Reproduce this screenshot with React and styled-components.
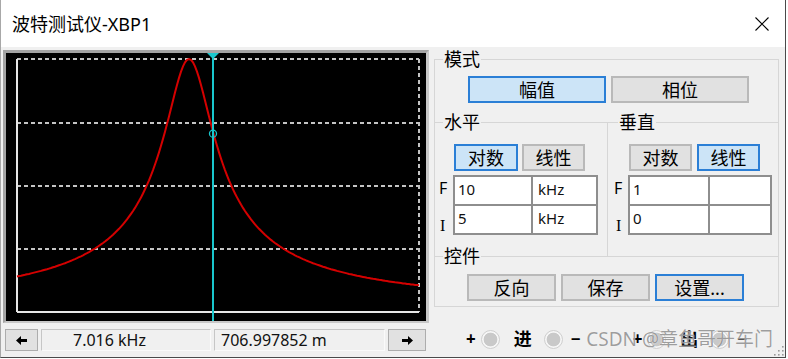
import React from 'react';
import styled, { createGlobalStyle } from 'styled-components';

const GlobalStyle = createGlobalStyle`
  html, body { margin: 0; padding: 0; background: #fff; }
  body { font-family: "Noto Sans", "Noto Sans CJK SC", sans-serif; color: #000; }
  * { box-sizing: border-box; }
`;

const Window = styled.div`
  position: relative;
  width: 786px;
  height: 358px;
  background: #f0f0f0;
  border-left: 1px solid #a8a8a8;
  border-right: 1px solid #4a4a4a;
  border-bottom: 1px solid #4a4a4a;
  overflow: hidden;
`;

const TitleBar = styled.div`
  display: flex;
  align-items: center;
  height: 47px;
  padding-left: 11px;
  background: #fff;
`;

const Title = styled.span`
  font-size: 18px;
  line-height: 22px;
`;

const CloseBox = styled.div`
  margin-left: auto;
  width: 46px;
  height: 47px;
  display: flex;
  align-items: center;
  justify-content: center;
`;

const Body = styled.div`
  display: flex;
  gap: 5px;
  padding: 3px 0 0 2px;
`;

const LeftCol = styled.div`
  width: 426px;
  display: flex;
  flex-direction: column;
  gap: 6px;
`;

const Scope = styled.div`
  height: 273px;
  background: #000;
  border-style: solid;
  border-width: 3px 3px 2px 3px;
  border-color: #a3a3a3 #c8c8c8 #c8c8c8 #a3a3a3;
  svg { display: block; }
`;

const NavRow = styled.div`
  display: flex;
  gap: 3px;
  height: 22px;
  padding-left: 2px;
`;

const NavButton = styled.div`
  width: ${p => p.$w}px;
  background: #e1e1e1;
  border: 1px solid #adadad;
  display: flex;
  align-items: center;
  justify-content: center;
`;

const Readout = styled.div`
  width: ${p => p.$w}px;
  border: 1px solid #c6c6c6;
  border-right-color: #fafafa;
  border-bottom-color: #fafafa;
  padding-left: ${p => p.$pad}px;
  font-size: 16px;
  line-height: 20px;
  color: #111;
  white-space: nowrap;
`;

const RightCol = styled.div`
  width: 345px;
  margin-top: -2px;
  display: flex;
  flex-direction: column;
`;

const Group = styled.fieldset`
  margin: 0;
  padding: 0;
  min-width: 0;
  border: 1px solid #d6d6d6;
`;

const Legend = styled.legend`
  margin-left: ${p => p.$at}px;
  padding: 0 1px;
  font-size: 18px;
  line-height: 22px;
`;

const SubGroup = styled.fieldset`
  margin: ${p => p.$lift ? '-11px 0 0' : '0'};
  padding: 0;
  min-width: 0;
  border: none;
  border-top: 1px solid #d6d6d6;
  border-right: ${p => p.$divider ? '1px solid #d6d6d6' : 'none'};
  width: ${p => p.$w ? `${p.$w}px` : 'auto'};
  flex: ${p => p.$w ? 'none' : '1'};
  height: ${p => p.$h ? `${p.$h}px` : 'auto'};
`;

const ButtonRow = styled.div`
  display: flex;
  gap: ${p => p.$gap}px;
  padding: ${p => p.$pad};
`;

const Button = styled.div`
  width: ${p => p.$w}px;
  height: 27px;
  display: flex;
  align-items: center;
  justify-content: center;
  font-size: 18px;
  line-height: 1;
  background: ${p => p.$on ? '#cce4f7' : '#e1e1e1'};
  border: 2px solid ${p => p.$focus ? '#2b7fd6' : '#b9b9b9'};
`;

const Split = styled.div`
  display: flex;
`;

const Entry = styled.div`
  display: flex;
  margin-top: 4px;
`;

const Letters = styled.div`
  width: ${p => p.$w}px;
  display: flex;
  flex-direction: column;
`;

const Letter = styled.div`
  height: 30px;
  padding-top: ${p => p.$drop ? 10 : 2}px;
  padding-left: ${p => p.$left}px;
  font-family: ${p => p.$serif ? '"Liberation Serif", serif' : '"Noto Sans", sans-serif'};
  font-size: 16px;
  line-height: 22px;
`;

const Cells = styled.div`
  display: grid;
  grid-template-columns: ${p => p.$cols};
  grid-template-rows: 27px 27px;
  gap: 2px;
  padding: 2px;
  background: #8e8e8e;
`;

const Cell = styled.div`
  background: #fff;
  font-size: 15px;
  line-height: 20px;
  padding: 2px 0 0 ${p => p.$pad || 3}px;
  color: #101010;
`;

const RadioRow = styled.div`
  display: flex;
  align-items: center;
  height: 22px;
  margin-top: 21px;
  padding-left: 32px;
  gap: 52px;
`;

const RadioGroup = styled.div`
  display: flex;
  align-items: center;
`;

const Sign = styled.span`
  font-size: 17px;
  font-weight: 700;
  line-height: 20px;
  margin: ${p => p.$m};
`;

const Word = styled.span`
  font-size: 18px;
  font-weight: 700;
  line-height: 20px;
  margin: 0 12px 0 14px;
`;

const Radio = styled.span`
  width: 19px;
  height: 19px;
  border-radius: 50%;
  border: 1px solid #cfcfcf;
  background: radial-gradient(circle, #c9c9c9 0 6.5px, #f6f6f6 7.2px);
`;

const Watermark = styled.div`
  position: absolute;
  right: 12px;
  top: 327px;
  font-size: 19px;
  line-height: 24px;
  color: rgba(120, 120, 120, 0.72);
  text-shadow: 0 0 1px #fff;
  white-space: nowrap;
`;

const Grip = styled.svg`
  position: absolute;
  right: 1px;
  bottom: 1px;
`;

function Chart() {
  const pts = [];
  for (let x = 11; x <= 413; x += 2) {
    const d = x - 183;
    const g = 1 / Math.sqrt(1 + (0.041 * d) ** 2);
    pts.push(`${x},${(259 - 253 * g).toFixed(1)}`);
  }
  const cx = 207;
  const cg = 1 / Math.sqrt(1 + (0.041 * (cx - 183)) ** 2);
  const cy = 259 - 253 * cg + 2;
  const grid = [70, 133, 196];
  return (
    <svg width="420" height="268" viewBox="0 0 420 268">
      <line x1="11" y1="6" x2="413" y2="6" stroke="#c4c4c4" strokeWidth="2" strokeDasharray="4 3" />
      {grid.map(y => (
        <line key={y} x1="11" y1={y} x2="413" y2={y} stroke="#c4c4c4" strokeWidth="2" strokeDasharray="4 3" />
      ))}
      <line x1="413" y1="6" x2="413" y2="259" stroke="#c4c4c4" strokeWidth="2" strokeDasharray="4 3" />
      <line x1="11" y1="6" x2="11" y2="259" stroke="#e6e6e6" strokeWidth="2" />
      <line x1="11" y1="259" x2="413" y2="259" stroke="#e6e6e6" strokeWidth="2" />
      <polyline points={pts.join(' ')} fill="none" stroke="#d40000" strokeWidth="2" />
      <line x1={cx} y1="0" x2={cx} y2="268" stroke="#19c6cc" strokeWidth="2" />
      <polygon points={`${cx - 6},0 ${cx + 6},0 ${cx},6`} fill="#19c6cc" />
      <circle cx={cx} cy={cy} r="3.5" fill="none" stroke="#19c6cc" strokeWidth="1.3" />
    </svg>
  );
}

function Arrow({ right }) {
  return (
    <svg width="11" height="9" viewBox="0 0 11 9" style={right ? { transform: 'scaleX(-1)' } : undefined}>
      <path d="M0 4.5 L5 0 L5 3 L11 3 L11 6 L5 6 L5 9 Z" fill="#000" />
    </svg>
  );
}

function Entries({ lw, cols, rows, fLeft, iLeft }) {
  return (
    <Entry>
      <Letters $w={lw}>
        <Letter $left={fLeft}>F</Letter>
        <Letter $left={iLeft} $serif $drop>I</Letter>
      </Letters>
      <Cells $cols={cols}>
        {rows.flat().map((v, i) => (
          <Cell key={i} $pad={i % 2 ? 5 : 3}>{v}</Cell>
        ))}
      </Cells>
    </Entry>
  );
}

function Radios({ word }) {
  return (
    <RadioGroup>
      <Sign $m="0 5px 0 0">+</Sign>
      <Radio />
      <Word>{word}</Word>
      <Radio />
      <Sign $m="0 0 0 8px">−</Sign>
    </RadioGroup>
  );
}

export default function App() {
  return (
    <>
      <GlobalStyle />
      <Window>
        <TitleBar>
          <Title>波特测试仪-XBP1</Title>
          <CloseBox>
            <svg width="14" height="14" viewBox="0 0 14 14">
              <path d="M0.5 0.5 L13.5 13.5 M13.5 0.5 L0.5 13.5" stroke="#000" strokeWidth="1.1" />
            </svg>
          </CloseBox>
        </TitleBar>
        <Body>
          <LeftCol>
            <Scope>
              <Chart />
            </Scope>
            <NavRow>
              <NavButton $w={33}><Arrow /></NavButton>
              <Readout $w={170} $pad={31}>7.016 kHz</Readout>
              <Readout $w={171} $pad={6}>706.997852 m</Readout>
              <NavButton $w={38}><Arrow right /></NavButton>
            </NavRow>
          </LeftCol>
          <RightCol>
            <Group>
              <Legend $at={8}>模式</Legend>
              <ButtonRow $gap={5} $pad="6px 0 8px 33px">
                <Button $w={138} $on $focus>幅值</Button>
                <Button $w={138}>相位</Button>
              </ButtonRow>
              <Split>
                <SubGroup $w={173} $h={145} $divider>
                  <Legend $at={8}>水平</Legend>
                  <ButtonRow $gap={4} $pad="11px 0 0 19px">
                    <Button $w={64} $on $focus>对数</Button>
                    <Button $w={63}>线性</Button>
                  </ButtonRow>
                  <Entries lw={18} cols="76px 63px" fLeft={4} iLeft={5}
                    rows={[['10', 'kHz'], ['5', 'kHz']]} />
                </SubGroup>
                <SubGroup>
                  <Legend $at={10}>垂直</Legend>
                  <ButtonRow $gap={5} $pad="11px 0 0 21px">
                    <Button $w={63}>对数</Button>
                    <Button $w={63} $on $focus>线性</Button>
                  </ButtonRow>
                  <Entries lw={20} cols="78px 60px" fLeft={6} iLeft={8}
                    rows={[['1', ''], ['0', '']]} />
                </SubGroup>
              </Split>
              <SubGroup $lift>
                <Legend $at={8}>控件</Legend>
                <ButtonRow $gap={5} $pad="7px 0 5px 32px">
                  <Button $w={89}>反向</Button>
                  <Button $w={89}>保存</Button>
                  <Button $w={89} $focus>设置...</Button>
                </ButtonRow>
              </SubGroup>
            </Group>
            <RadioRow>
              <Radios word="进" />
              <Radios word="出" />
            </RadioRow>
          </RightCol>
        </Body>
        <Watermark>CSDN @章鱼哥开车门</Watermark>
        <Grip width="11" height="11" viewBox="0 0 11 11">
          {[[9, 1], [9, 5], [5, 5], [9, 9], [5, 9], [1, 9]].map(([x, y]) => (
            <rect key={`${x}-${y}`} x={x} y={y} width="1.6" height="1.6" fill="#9a9a9a" />
          ))}
        </Grip>
      </Window>
    </>
  );
}
